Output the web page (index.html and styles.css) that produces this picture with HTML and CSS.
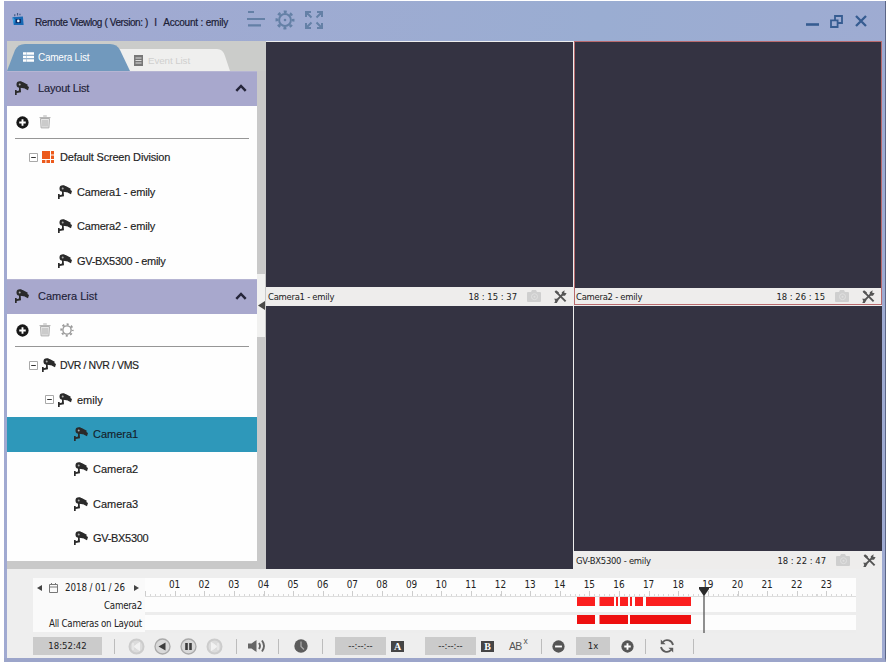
FILE: index.html
```
<!DOCTYPE html>
<html lang="en">
<head>
<meta charset="utf-8">
<title>Remote Viewlog</title>
<link rel="stylesheet" href="styles.css">
</head>
<body>
<svg class="defs" aria-hidden="true">
  <symbol id="cam" viewBox="0 0 14 14">
    <circle cx="4.8" cy="3.6" r="3.3"/>
    <path d="M5 .5 8.200 1.200l4.600 2.500-1.500 4.100L5.500 6.700z"/>
    <path d="M11.500 4.600l2.500 1.500-1 3.100-3-1.400zM5.600 5.500 6 11.200 1.600 12V10.200L4 9.600V6zM0 9h1.700v5H0z"/>
    <circle cx="4.700" cy="3.500" r="1" class="hole"/>
  </symbol>
  <symbol id="plus" viewBox="0 0 14 14"><circle cx="7" cy="7" r="6.600"/><path d="M7 3.500v7M3.500 7h7" class="cut"/></symbol>
  <symbol id="minus" viewBox="0 0 14 14"><circle cx="7" cy="7" r="6.600"/><path d="M3.300 7h7.400" class="cut"/></symbol>
  <symbol id="trash" viewBox="0 0 12 14">
    <path d="M1.500 3.500l.6 9.400h7.800l.6-9.400z" fill="#e6e6e6" stroke="#b0b0b0"/>
    <path d="M.5 2.600h11M4.200 1h3.600M4 5v6.500M6 5v6.500M8 5v6.500" fill="none" stroke="#b0b0b0"/>
  </symbol>
  <symbol id="gear" viewBox="0 0 20 20">
    <circle cx="10" cy="10" r="5.900" fill="none" stroke="currentColor" stroke-width="2"/>
    <circle cx="10" cy="10" r="8.200" fill="none" stroke="currentColor" stroke-width="2.600" stroke-dasharray="3 3.440" stroke-dashoffset="1.500"/>
  </symbol>
  <symbol id="box" viewBox="0 0 9 9"><path d="M.5.5h8v8h-8z" fill="#fff" stroke="#a9a9a9"/><path d="M2.200 4.500h4.600" stroke="#333"/></symbol>
  <symbol id="up" viewBox="0 0 12 8"><path d="M1.300 6.800 6 2l4.700 4.800" fill="none" stroke="#25253a" stroke-width="2.500"/></symbol>
  <symbol id="photo" viewBox="0 0 14 12"><path d="M0 3q0-1 1-1h3l1-2h4l1 2h3q1 0 1 1v8q0 1-1 1H1q-1 0-1-1z" fill="#cfcfcf"/><circle cx="7.500" cy="6.700" r="3" fill="none" stroke="#e0e0e0"/><circle cx="7.500" cy="6.700" r="1" fill="#e0e0e0"/></symbol>
  <symbol id="tools" viewBox="0 0 14 14"><path d="M2 1.800 12.500 12.300M1.500 12.500 9 5" fill="none" stroke="#555" stroke-width="2.100"/><path d="M8.400 5.400V2.400L11.400.4l-.4 2.600 2.600.5-1.800 2.700H9.400zM0 9.300h3.300l1.500 1.600L3 13.900H.2l1.600-2.300zM.6 1.800 2.200.3l3.200 2.400L3.700 4.500z" fill="#555"/></symbol>
</svg>

<main class="window">
  <header class="titlebar">
    <svg class="logo" viewBox="0 0 13 15"><path d="M.5 5 11.800 4.200 12.600 13.500H2z" fill="#1769b4"/><path d="M.5 5 3 7.500 2 13.500z" fill="#35a2df"/><rect x="4" y="7" width="5.600" height="4.400" fill="#0c2b66"/><circle cx="6.800" cy="9" r="1.400" fill="#eef6ff"/><path d="M3 4V1.800M6 3.200V.4M8.600 3V1.200" stroke="#435b86" stroke-width="1.300"/></svg>
    <div class="title"><span>Remote Viewlog ( Version: )</span><span>I</span><span>Account : emily</span></div>
    <svg class="ti-list" viewBox="0 0 18 17"><path d="M1 2h6M0 9h18M1 15.300h13" stroke="#6480a6" stroke-width="2.200"/></svg>
    <svg class="ti-gear" viewBox="0 0 20 20"><use href="#gear"/><circle cx="10" cy="10" r="1.300" fill="currentColor"/></svg>
    <svg class="ti-full" viewBox="0 0 18 18" fill="none" stroke="#6480a6" stroke-width="2"><path d="M1 6V1h5M1.500 1.500l5 5M12 1h5v5M16.500 1.500l-5 5M1 12v5h5M1.500 16.500l5-5M12 17h5v-5M16.500 16.500l-5-5"/></svg>
    <svg class="win-min" viewBox="0 0 13 3"><path d="M0 1.500h13" stroke="#365c91" stroke-width="2.600"/></svg>
    <svg class="win-res" viewBox="0 0 13 13" fill="none" stroke="#365c91" stroke-width="1.800"><path d="M1 5.400h6.600V12H1zM5 5V1h7v7H8"/></svg>
    <svg class="win-x" viewBox="0 0 12 12"><path d="M1 1l10 10M11 1 1 11" stroke="#365c91" stroke-width="2.300"/></svg>
  </header>

  <div class="middle">
    <aside class="sidebar">
      <nav class="tabs">
        <svg class="tabshape" viewBox="0 0 259 30">
          <path d="M112 8h98q6 0 8 7l5 15H122z" fill="#efefee"/>
          <path d="M0 30 8 9Q11 3 18 3h85q7 0 10 6l10 21z" fill="#7199bd"/>
        </svg>
        <div class="tab on"><svg viewBox="0 0 11 10"><path d="M0 1.500h11M0 5h11M0 8.500h11" stroke="#fff" stroke-width="2.300"/><path d="M3.500 0v10" stroke="#9db7d0" stroke-width=".6"/></svg>Camera List</div>
        <div class="tab"><svg viewBox="0 0 9 11"><path d="M0 0h9v11H0z" fill="#777"/><path d="M1.500 3h6M1.500 5.500h6M1.500 8h6" stroke="#ddd"/></svg>Event List</div>
      </nav>
      <div class="side-body">
        <div class="panels">
          <section class="panel layouts">
            <h2><svg class="cam"><use href="#cam"/></svg><span class="tight">Layout List</span><svg class="up"><use href="#up"/></svg></h2>
            <div class="tools"><svg class="plus"><use href="#plus"/></svg><svg class="trash"><use href="#trash"/></svg></div>
            <ul>
              <li class="l1"><svg class="box"><use href="#box"/></svg><svg class="division" viewBox="0 0 12 12" fill="#ec5a1c"><path d="M0 0h8v8H0zM9 0h3v3.400H9zM9 4.400h3V8H9zM0 9h3.400v3H0zM4.400 9H8v3H4.400zM9 9h3v3H9z"/></svg><span class="tight">Default Screen Division</span></li>
              <li class="l2"><svg class="cam"><use href="#cam"/></svg><span class="tight">Camera1 - emily</span></li>
              <li class="l2"><svg class="cam"><use href="#cam"/></svg><span class="tight">Camera2 - emily</span></li>
              <li class="l2"><svg class="cam"><use href="#cam"/></svg><span class="tighter">GV-BX5300 - emily</span></li>
            </ul>
          </section>
          <section class="panel cameras">
            <h2><svg class="cam"><use href="#cam"/></svg>Camera List<svg class="up"><use href="#up"/></svg></h2>
            <div class="tools"><svg class="plus"><use href="#plus"/></svg><svg class="trash"><use href="#trash"/></svg><svg class="sgear"><use href="#gear"/></svg></div>
            <ul>
              <li class="l1"><svg class="box"><use href="#box"/></svg><svg class="cam"><use href="#cam"/></svg><span class="dvr">DVR / NVR / VMS</span></li>
              <li class="l2 open"><svg class="box"><use href="#box"/></svg><svg class="cam"><use href="#cam"/></svg>emily</li>
              <li class="l3 sel"><svg class="cam"><use href="#cam"/></svg>Camera1</li>
              <li class="l3"><svg class="cam"><use href="#cam"/></svg>Camera2</li>
              <li class="l3"><svg class="cam"><use href="#cam"/></svg>Camera3</li>
              <li class="l3"><svg class="cam"><use href="#cam"/></svg><span class="tighter">GV-BX5300</span></li>
            </ul>
          </section>
        </div>
        <div class="splitter"><div class="grip"><svg viewBox="0 0 7 9"><path d="M7 0v9L0 4.500z" fill="#4a4a48"/></svg></div></div>
      </div>
    </aside>

    <div class="views">
      <div class="view"><div class="screen"></div><div class="caption"><span>Camera1 - emily</span><time>18 : 15 : 37</time><svg class="photo"><use href="#photo"/></svg><svg class="wrench"><use href="#tools"/></svg></div></div>
      <div class="view active"><div class="screen"></div><div class="caption"><span>Camera2 - emily</span><time>18 : 26 : 15</time><svg class="photo"><use href="#photo"/></svg><svg class="wrench"><use href="#tools"/></svg></div></div>
      <div class="view"><div class="screen"></div></div>
      <div class="view"><div class="screen"></div><div class="caption"><span>GV-BX5300 - emily</span><time>18 : 22 : 47</time><svg class="photo"><use href="#photo"/></svg><svg class="wrench"><use href="#tools"/></svg></div></div>
    </div>
  </div>

  <footer class="bottom">
    <div class="timeline">
      <div class="names">
        <div class="date"><svg class="arr" viewBox="0 0 5 6"><path d="M5 0v6L0 3z" fill="#444"/></svg><svg class="cal" viewBox="0 0 9 10"><path d="M.5 1.500h8v8h-8zM.5 4h8M2.500 0v2M6.500 0v2" fill="none" stroke="#777"/></svg><span>2018 / 01 / 26</span><svg class="arr" viewBox="0 0 5 6"><path d="M0 0v6l5-3z" fill="#444"/></svg></div>
        <div class="name">Camera2</div>
        <div class="name">All Cameras on Layout</div>
      </div>
      <div class="scale">
        <div class="hours"><span>01</span><span>02</span><span>03</span><span>04</span><span>05</span><span>06</span><span>07</span><span>08</span><span>09</span><span>10</span><span>11</span><span>12</span><span>13</span><span>14</span><span>15</span><span>16</span><span>17</span><span>18</span><span>19</span><span>20</span><span>21</span><span>22</span><span>23</span></div>
        <div class="ticks"></div>
        <svg class="track" viewBox="0 0 711 15"><path d="M432 0h18v9h-18zM454.500 0H469v9h-14.500zM471 0h2v9h-2zM475 0h8v9h-8zM485 0h2v9h-2zM490 0h8v9h-8zM501 0h45v9h-45z" fill="#fb1e1e"/></svg>
        <svg class="track" viewBox="0 0 711 15"><path d="M432 0h18v9h-18zM454.500 0H483v9h-28.500zM485 0h61v9h-61z" fill="#ee1010"/></svg>
        <svg class="cursor" viewBox="0 0 10 46"><path d="M0 0h10v2L5.500 8.500h-1L0 2z" fill="#2c2c2c"/><path d="M5 8v38" stroke="#555" stroke-width="1.300"/></svg>
      </div>
    </div>
    <div class="controls">
      <div class="field clock">18:52:42</div>
      <i class="sep s1"></i>
      <svg class="round" viewBox="0 0 17 17"><circle cx="8.500" cy="8.500" r="7" fill="#dcdcdc" stroke="#ccc" stroke-width="2"/><path d="M11.500 4.500v8L6 8.500zM5 5v7" fill="#f2f2f2" stroke="#f2f2f2"/></svg>
      <svg class="round" viewBox="0 0 17 17"><circle cx="8.500" cy="8.500" r="7.500" fill="#d9d9d9" stroke="#aaa" stroke-width="1.300"/><path d="M11.500 4.500v8L4.500 8.500z" fill="#3c3c3c"/></svg>
      <svg class="round" viewBox="0 0 17 17"><circle cx="8.500" cy="8.500" r="7.500" fill="#d9d9d9" stroke="#aaa" stroke-width="1.300"/><path d="M6.500 5v7M10.500 5v7" stroke="#3c3c3c" stroke-width="2.600"/></svg>
      <svg class="round" viewBox="0 0 17 17"><circle cx="8.500" cy="8.500" r="7" fill="#dcdcdc" stroke="#ccc" stroke-width="2"/><path d="M5.500 4.500v8L11 8.500zM12 5v7" fill="#f2f2f2" stroke="#f2f2f2"/></svg>
      <i class="sep s2"></i>
      <svg class="sound" viewBox="0 0 18 14"><path d="M0 4.500h3.500L8.500 1v12L3.500 9.500H0z" fill="#666"/><path d="M11 4q2 3 0 6M14 1.500q4 5.500 0 11" fill="none" stroke="#666" stroke-width="1.900"/></svg>
      <i class="sep s3"></i>
      <svg class="dial" viewBox="0 0 14 14"><circle cx="7" cy="7" r="6.700" fill="#5c5c5c"/><path d="M7 2.500V7.500l3 3" fill="none" stroke="#aaa" stroke-width="1.300"/></svg>
      <i class="sep s4"></i>
      <div class="field mark">--:--:--</div><div class="badge">A</div>
      <div class="field mark second">--:--:--</div><div class="badge">B</div>
      <div class="abx">AB<sup>x</sup></div>
      <i class="sep s5"></i>
      <svg class="zoomer"><use href="#minus"/></svg>
      <div class="field speed">1x</div>
      <svg class="zoomer"><use href="#plus"/></svg>
      <i class="sep s6"></i>
      <svg class="loop" viewBox="0 0 14 14"><path d="M13 6A6 6 0 0 0 3 2.800M1 8A6 6 0 0 0 11 11.200" fill="none" stroke="#5c5c5c" stroke-width="1.800"/><path d="M.8.500v4.800h4.800zM13.200 13.500V8.700H8.400z" fill="#5c5c5c"/></svg>
      <i class="sep s7"></i>
    </div>
  </footer>
</main>
</body>
</html>
```
FILE: styles.css
```
* { box-sizing: border-box; }
html, body { margin: 0; height: 664px; overflow: hidden; background: #fff; }
body { padding: 1px 1px 2px 4px; font-family: "Liberation Sans", sans-serif; font-size: 11px; color: #222; }
svg { display: block; flex: none; }
.defs { position: absolute; width: 0; height: 0; }
.hole { fill: #aaa; }
.cut { stroke: #fff; stroke-width: 2; fill: none; }

.window { width: 882px; height: 661px; padding: 0 3px; background: linear-gradient(100deg, #a2a9d1, #9aadd2 60%, #a0abd2); border-right: 1px solid #5b6687; display: flex; flex-direction: column; border-bottom: 4px solid #9ca5ca; }

.titlebar { height: 40px; flex: none; display: flex; align-items: center; padding: 0 14px 0 5px; color: #6480a6; }
.logo { width: 12px; height: 15px; margin-top: -4px; }
.title { width: 193px; margin: 3px 0 0 11px; display: flex; justify-content: space-between; font-size: 10px; letter-spacing: -.2px; color: #1b2036; -webkit-text-stroke: .2px #1b2036; white-space: nowrap; }
.title span:first-child { letter-spacing: -.4px; }
.ti-list { width: 18px; height: 17px; margin: -5px 0 0 19px; }
.ti-gear { width: 20px; height: 20px; margin: -3px 0 0 10px; }
.ti-full { width: 18px; height: 18px; margin: -3px 0 0 10px; }
.win-min { width: 13px; height: 3px; margin: 7px 0 0 auto; }
.win-res { width: 13px; height: 13px; margin-left: 11px; }
.win-x { width: 12px; height: 12px; margin-left: 12px; margin-right: 1px; }

.middle { height: 528px; flex: none; display: flex; background: #c9c9c9; }
.sidebar { width: 259px; flex: none; display: flex; flex-direction: column; }
.tabs { height: 30px; display: flex; position: relative; background: #cbccca; }
.tabshape { position: absolute; left: 0; top: 0; width: 259px; height: 30px; }
.tab { position: relative; display: flex; align-items: center; color: #cfcfcf; padding: 8px 0 0 4px; font-size: 9.800px; gap: 5px; letter-spacing: -.1px; }
.tab.on { width: 123px; color: #fff; padding: 2px 0 0 16px; font-size: 10px; gap: 4px; letter-spacing: -.25px; }
.tab svg { width: 9px; height: 11px; }
.tab.on svg { width: 11px; height: 10px; }
.side-body { display: flex; flex: 1; }
.panels { width: 250px; }
.panel { background: #fefefe; }
.layouts { height: 208px; }
.cameras { height: 282px; }
h2 { margin: 0; height: 35px; display: flex; align-items: center; padding: 0 10px 2px 8px; background: #a8a8cd; border-top: 1px solid #b6b5d3; font-size: 11px; font-weight: 400; color: #222238; -webkit-text-stroke: .15px #222238; }
h2 .cam { margin-right: 9px; }
.cam { width: 14px; height: 14px; fill: #2a2a2a; }
.tight { letter-spacing: -.18px; }
.tighter { letter-spacing: -.3px; }
.up { width: 12px; height: 8px; margin-left: auto; }
.tools { height: 33px; margin: 0 8px; border-bottom: 1px solid #969696; display: flex; align-items: center; padding-left: 1px; }
.plus { width: 13px; height: 13px; fill: #181818; }
.trash { width: 12px; height: 14px; margin-left: 10px; }
.sgear { width: 14px; height: 14px; margin-left: 9px; color: #999; }
ul { list-style: none; margin: 0; padding: 1px 0 0; }
li { height: 34.600px; display: flex; align-items: center; white-space: nowrap; -webkit-text-stroke: .15px #222; }
li .cam { margin-right: 5px; }
.box { width: 9px; height: 9px; }
.l1 { padding-left: 22px; }
.l1 .box { margin-right: 4px; }
.l1 .cam { margin-right: 4px; }
.division { width: 12px; height: 12px; margin-right: 6px; }
.dvr { font-size: 10.500px; letter-spacing: -.4px; }
.l2 { padding-left: 51px; }
.l2.open { padding-left: 38px; }
.open .box { margin-right: 4px; }
.l3 { padding-left: 67px; }
.sel { background: #2e98ba; color: #10212d; }
.splitter { width: 9px; padding-top: 203px; }
.grip { height: 63px; width: 8px; background: #f1f1f0; display: flex; align-items: center; padding-left: 1px; }
.grip svg { width: 7px; height: 9px; }

.views { flex: 1; display: grid; grid-template-columns: 307px 1fr; grid-template-rows: 264px 264px; column-gap: 1px; background: #ededed; }
.view { display: flex; flex-direction: column; padding-top: 1px; }
.view.active { border: 1px solid #b86a6d; padding-top: 0; }
.view.active .caption { height: 16px; }
.screen { flex: 1; background: #343342; }
.caption { height: 18px; display: flex; align-items: center; background: #eeedec; font-family: "DejaVu Sans Condensed", "DejaVu Sans", sans-serif; font-size: 9.400px; color: #202020; padding: 0 6px 0 2px; white-space: nowrap; }
.active .caption { padding: 0 6px 0 1px; }
.caption span { letter-spacing: -.25px; }
.caption time { margin-left: auto; }
.photo { width: 14px; height: 12px; margin-left: 10px; }
.wrench { width: 13px; height: 13px; margin-left: 13px; }

.bottom { flex: 1; background: #eeeeee; padding-top: 9px; font-family: "DejaVu Sans Condensed", "DejaVu Sans", sans-serif; font-size: 9.800px; }
.timeline { display: flex; height: 54px; margin-left: 26px; }
.names { width: 112px; background: #fafafa; text-align: right; }
.date { height: 19px; display: flex; align-items: center; padding: 0 6px 0 4px; }
.arr { width: 5px; height: 6px; }
.cal { width: 9px; height: 10px; margin: 0 auto 0 7px; }
.date span { margin-right: 9px; font-size: 9.700px; letter-spacing: -.1px; white-space: nowrap; }
.name { height: 18px; line-height: 17px; padding-right: 3px; letter-spacing: -.25px; white-space: nowrap; font-size: 9.700px; }
.scale { width: 711px; position: relative; background: #fdfdfd; }
.hours { display: flex; height: 13px; padding-left: 14.800px; line-height: 13px; }
.hours span { width: 29.625px; flex: none; text-align: center; font-size: 9.900px; }
.ticks { height: 6px; border-bottom: 1px solid #dedede; background: repeating-linear-gradient(90deg, #ccc 0 1px, transparent 1px 29.625px), repeating-linear-gradient(90deg, #d8d8d8 0 1px, transparent 1px 4.9375px) 0 3px no-repeat; }
.track { box-sizing: content-box; width: 711px; height: 15px; border-bottom: 3px solid #ededed; }
.cursor { position: absolute; left: 554px; top: 9px; width: 10px; height: 46px; }

.controls { display: flex; align-items: center; height: 24px; padding-left: 26px; margin-top: 2px; }
.field { height: 18px; line-height: 18px; background: #cbcbcb; text-align: center; font-size: 9.500px; }
.clock { width: 69px; }
.sep { width: 1px; height: 15px; background: #bcbcbc; flex: none; }
.s1 { margin: 0 13px 0 12px; }
.round { width: 17px; height: 17px; margin-right: 9px; }
.s2 { margin: 0 11px 0 4px; }
.sound { width: 18px; height: 14px; }
.s3 { margin: 0 15px 0 12px; }
.dial { width: 14px; height: 14px; }
.s4 { margin: 0 12px 0 14px; }
.mark { width: 51px; }
.badge { width: 13px; height: 11px; line-height: 11px; margin-left: 5px; background: #454545; color: #fff; text-align: center; font-family: "Liberation Serif", serif; font-weight: 700; font-size: 10px; }
.second { margin-left: 21px; }
.abx { width: 20px; margin-left: 15px; font-family: "Liberation Sans", sans-serif; font-size: 10.500px; letter-spacing: -.8px; color: #555; white-space: nowrap; }
.abx sup { font-size: 8.500px; line-height: 0; margin-left: 2px; position: relative; top: -2px; }
.s5 { margin: 0 10px 0 12px; }
.zoomer { width: 13px; height: 13px; fill: #565656; }
.speed { width: 34px; margin: 0 11px; }
.s6 { margin: 0 14px 0 11px; }
.loop { width: 14px; height: 14px; }
.s7 { margin-left: 19px; }
```
